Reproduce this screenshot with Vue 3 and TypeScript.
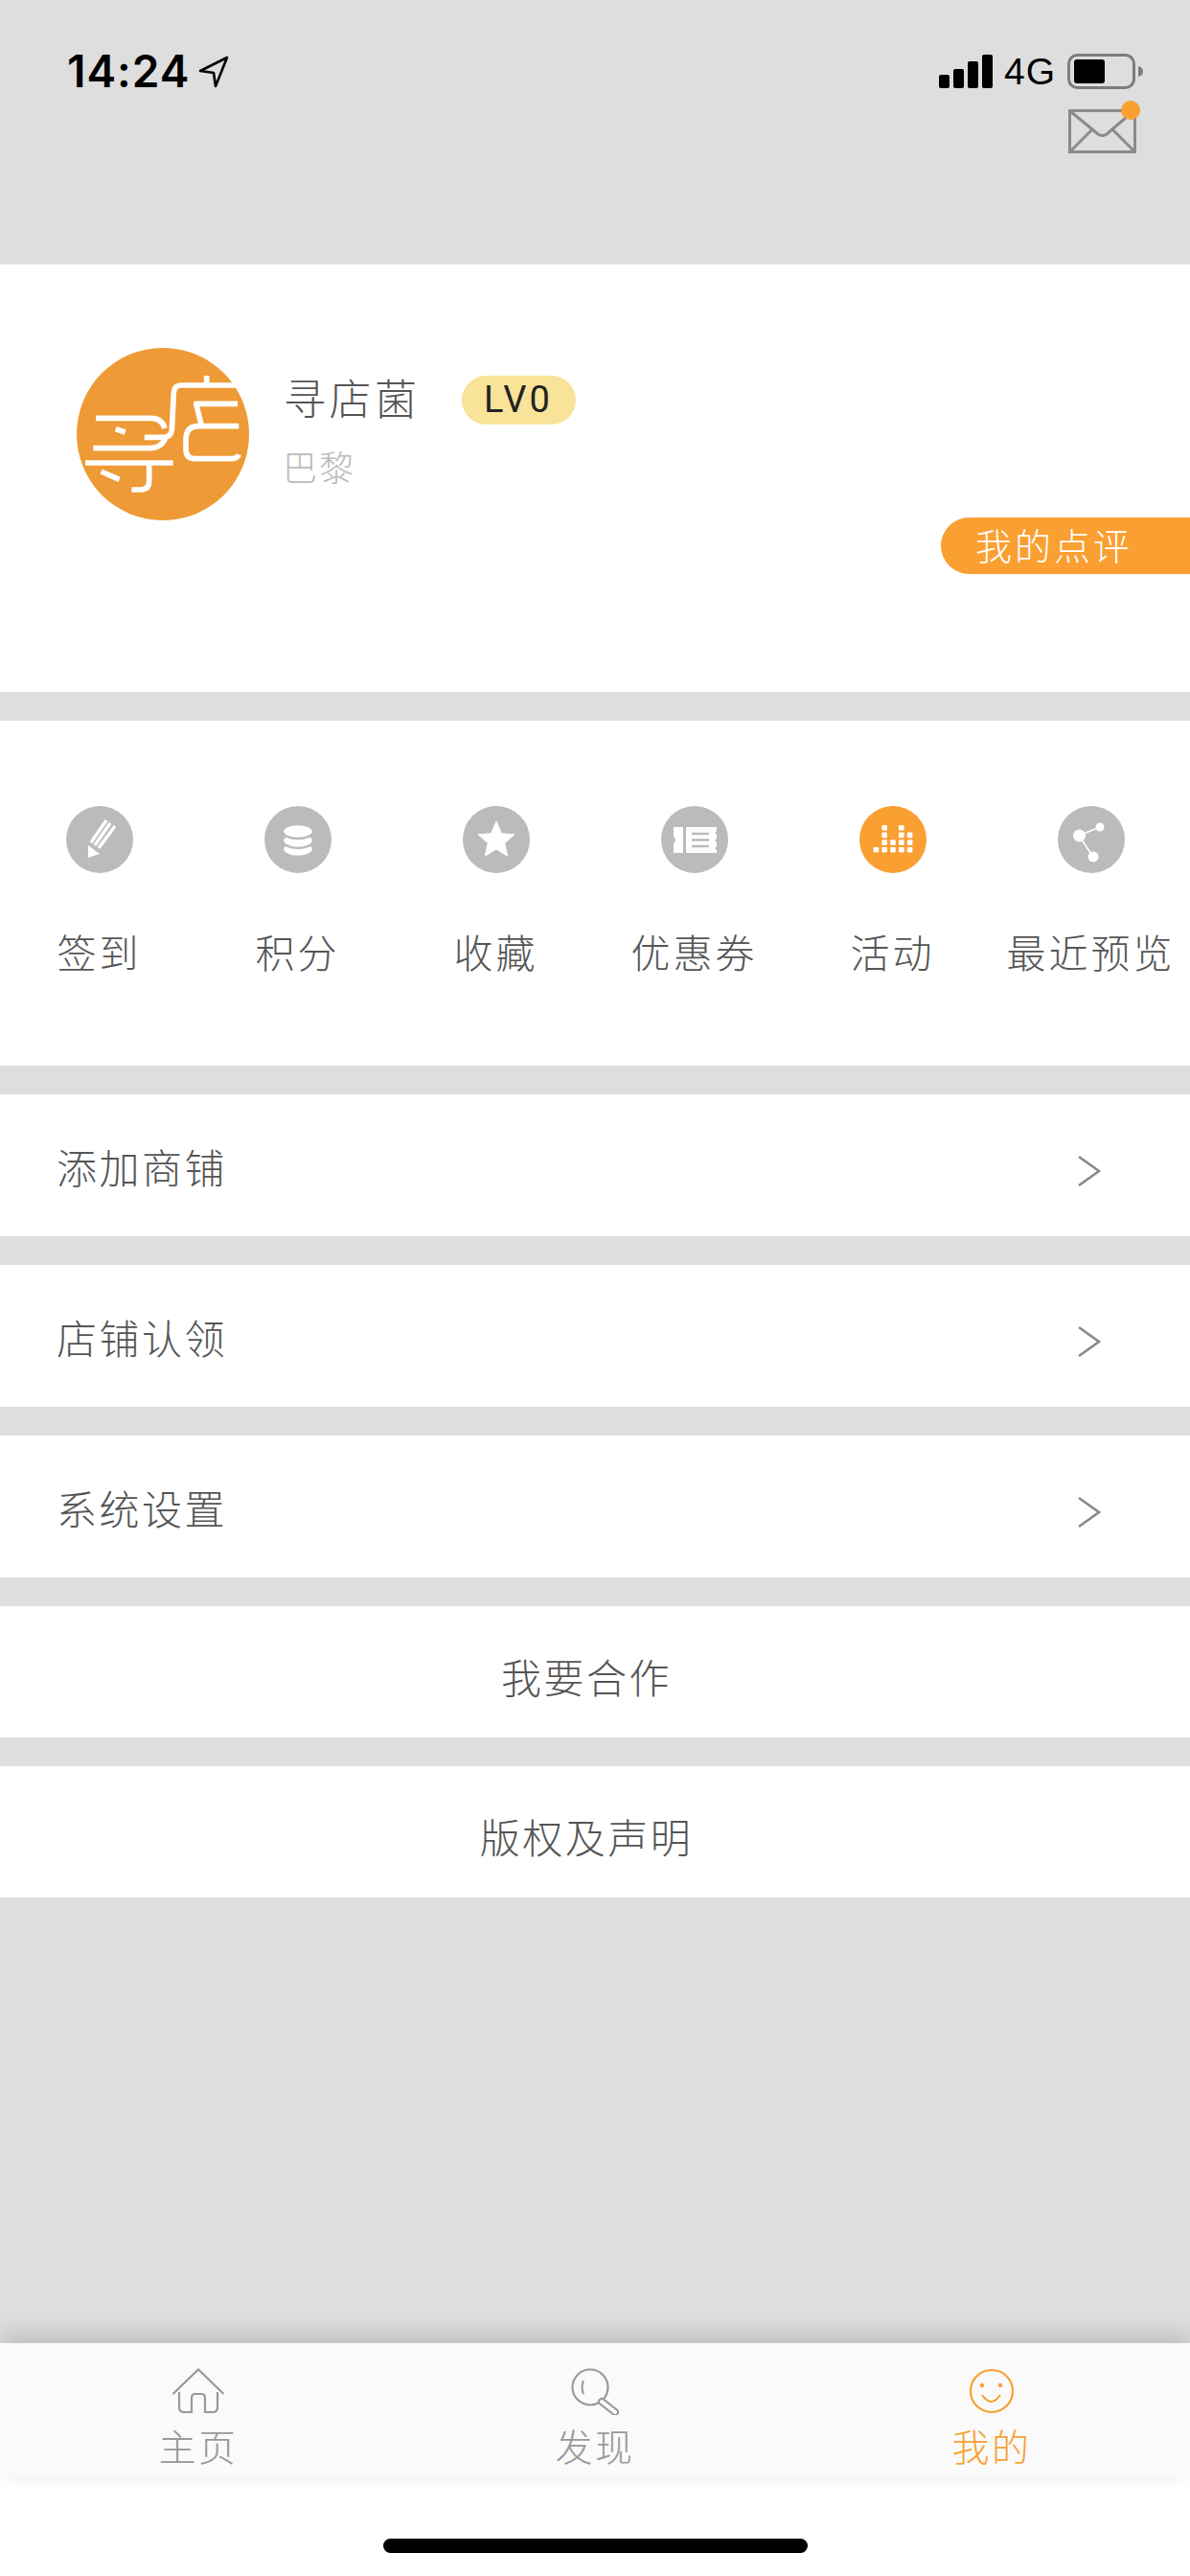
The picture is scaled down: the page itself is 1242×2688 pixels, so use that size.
<script setup lang="ts">
const actions = [
  { key: 'sign', label: '签到' },
  { key: 'points', label: '积分' },
  { key: 'star', label: '收藏' },
  { key: 'coupon', label: '优惠券' },
  { key: 'activity', label: '活动', active: true },
  { key: 'share', label: '最近预览' },
]
const links = ['添加商铺', '店铺认领', '系统设置']
const plainLinks = ['我要合作', '版权及声明']

// column heights of the little equalizer icon
const bars = [1, 4, 2, 4, 3]
const cells = bars.flatMap((h, col) =>
  Array.from({ length: h }, (_, row) => ({ x: 14.6 + col * 8.8, y: 43 - row * 7.7 })),
)
</script>

<template>
  <main class="page">
    <header class="top">
      <div class="status">
        <div class="clock">
          <span>14:24</span>
          <svg class="loc" width="32" height="34" viewBox="0 0 32 34">
            <path d="M30 2 L2 16 L16 18 L18 32 Z" fill="none" stroke="#000" stroke-width="2.6" stroke-linejoin="round" />
          </svg>
        </div>
        <div class="status-right">
          <svg width="56" height="36" viewBox="0 0 56 36">
            <rect x="0" y="21" width="11" height="14" rx="2" />
            <rect x="15" y="15" width="11" height="20" rx="2" />
            <rect x="30" y="7" width="11" height="28" rx="2" />
            <rect x="45" y="0" width="11" height="35" rx="2" />
          </svg>
          <span class="net">4G</span>
          <svg width="80" height="38" viewBox="0 0 80 38">
            <rect x="1.5" y="1.5" width="68" height="34" rx="9" fill="none" stroke="#7d7d7d" stroke-width="3" />
            <rect x="7" y="6" width="32" height="25" rx="3" />
            <path d="M74 13 Q79 14 79 18.500 Q79 23 74 24 Z" fill="#7d7d7d" />
          </svg>
        </div>
      </div>
      <div class="mail-row">
        <div class="mail">
          <svg width="72" height="46" viewBox="0 0 72 46">
            <rect x="1.500" y="1.500" width="68" height="43" fill="none" stroke="#8a8a8a" stroke-width="3" />
            <path d="M2 2 L31 26 Q35.500 29 40 26 L68 2 M2 44 L25 21 M69 44 L46 21" fill="none" stroke="#8a8a8a" stroke-width="3" />
          </svg>
          <i class="dot"></i>
        </div>
      </div>
    </header>

    <section class="profile">
      <svg class="avatar" width="180" height="180" viewBox="58 38 540 540">
        <circle cx="328" cy="308" r="270" fill="#ee9a36" />
        <g fill="none" stroke="#fff" stroke-width="17" stroke-linejoin="round">
          <path d="M118 258 H290 Q325 258 334 290" />
          <path d="M270 318 H330 Q352 318 356 296 L362 178 Q364 155 385 155 H556" />
          <path d="M110 352 H285 Q322 352 336 322" />
          <path d="M180 292 L210 302" />
          <path d="M85 398 H360" />
          <path d="M285 398 V455 Q285 482 258 482 H230" />
          <path d="M135 425 L192 450" />
          <path d="M465 125 V155" />
          <path d="M562 213 H432 L450 285" />
          <path d="M566 283 H440 Q400 283 400 325 V355 Q400 385 430 385 H545 Q560 385 566 372" />
        </g>
      </svg>
      <div class="who">
        <div class="name-line">
          <span class="name">寻店菌</span>
          <span class="level">LV0</span>
        </div>
        <div class="city">巴黎</div>
      </div>
      <div class="review">我的点评</div>
    </section>

    <section class="actions">
      <div v-for="a in actions" :key="a.key" class="action">
        <svg class="badge" :class="{ on: a.active }" width="70" height="70" viewBox="0 0 70 70">
          <circle cx="35" cy="35" r="35" class="disc" />
          <g v-if="a.key === 'sign'">
            <path d="M23 54 V41 L35 50 Z" fill="#fff" />
            <path d="M26 38 L42 15 M30 41 L46 18 M34 44 L51 21" stroke="#fff" stroke-width="3.400" fill="none" />
          </g>
          <g v-else-if="a.key === 'points'" fill="#fff" stroke="#bbb" stroke-width="2.500">
            <ellipse cx="35" cy="45" rx="16" ry="8" />
            <ellipse cx="35" cy="36" rx="16" ry="8" />
            <ellipse cx="35" cy="26.500" rx="16" ry="7.500" />
          </g>
          <path
            v-else-if="a.key === 'star'"
            d="M35 16 L40.300 28.700 L54 29.800 L43.600 38.800 L46.800 52.200 L35 45 L23.200 52.200 L26.400 38.800 L16 29.800 L29.700 28.700 Z"
            fill="#fff"
            stroke="#fff"
            stroke-linejoin="round"
          />
          <g v-else-if="a.key === 'coupon'">
            <path d="M13 22 H23 V49 H13 V39 Q17 35.500 13 32 Z" fill="#fff" />
            <path d="M26 22 H58 V26 L56 28 L58 30 V34 L56 36 L58 38 V42 L56 44 L58 46 V49 H26 Z" fill="#fff" />
            <path d="M32 29 H50 M32 35.500 H50 M32 42 H50" stroke="#bbb" stroke-width="2.500" />
          </g>
          <g v-else-if="a.key === 'activity'" fill="#fff">
            <rect v-for="(c, i) in cells" :key="i" :x="c.x" :y="c.y" width="5.600" height="5.600" rx="1" />
          </g>
          <g v-else fill="#fff">
            <path d="M22 31 L44 22 M22 31 L37 53" stroke="#fff" stroke-width="1.600" />
            <circle cx="22.500" cy="31" r="6.500" />
            <circle cx="44" cy="22" r="4.500" />
            <circle cx="37" cy="53" r="5.500" />
          </g>
        </svg>
        <span class="action-label">{{ a.label }}</span>
      </div>
    </section>

    <section v-for="l in links" :key="l" class="link">
      <span>{{ l }}</span>
      <svg class="chev" width="26" height="34" viewBox="0 0 26 34">
        <path d="M2 2 L23 17 L2 32" fill="none" stroke="#888" stroke-width="2.600" />
      </svg>
    </section>

    <section v-for="l in plainLinks" :key="l" class="plain">{{ l }}</section>

    <div class="spacer"></div>

    <nav class="tabs">
      <div class="tab">
        <svg width="56" height="50" viewBox="0 0 56 50">
          <path d="M1.500 28 L28 2.500 L54.500 28 M8 26 V42 Q8 47 13 47 H21 V32 Q21 28 25 28 H31 Q35 28 35 32 V47 H43 Q48 47 48 42 V26" fill="none" stroke="#999" stroke-width="2.200" />
        </svg>
        <span>主页</span>
      </div>
      <div class="tab">
        <svg width="56" height="50" viewBox="0 0 56 50">
          <circle cx="23" cy="21" r="18.500" fill="none" stroke="#999" stroke-width="2.200" />
          <path d="M16 14 Q13 21 16 28" fill="none" stroke="#999" stroke-width="2" />
          <path d="M35 36 L49 47" stroke="#999" stroke-width="8" stroke-linecap="round" />
          <path d="M35 36 L49 47" stroke="#fafafa" stroke-width="4" stroke-linecap="round" />
        </svg>
        <span>发现</span>
      </div>
      <div class="tab on">
        <svg width="56" height="50" viewBox="0 0 56 50">
          <circle cx="28" cy="25" r="22" fill="none" stroke="#f9a033" stroke-width="2.200" />
          <circle cx="18" cy="19" r="2.200" fill="#f9a033" />
          <circle cx="37" cy="19" r="2.200" fill="#f9a033" />
          <path d="M18 29 Q27.500 43 37 29" fill="none" stroke="#f9a033" stroke-width="2.200" />
        </svg>
        <span>我的</span>
      </div>
    </nav>

    <footer class="home-area"><i class="home-bar"></i></footer>
  </main>
</template>

<style>
html, body { margin: 0; padding: 0; }
</style>

<style scoped>
.page { width: 1242px; height: 2688px; display: flex; flex-direction: column; background: #dedede; color: #555; font-family: "Noto Sans CJK SC", "Noto Sans", sans-serif; overflow: hidden; }

.top { height: 276px; box-sizing: border-box; padding: 51px 48px 0 70px; }
.status { display: flex; justify-content: space-between; align-items: flex-start; height: 63px; }
.clock { display: flex; align-items: center; gap: 9px; height: 46px; color: #000; font: 600 46px/46px Inter, "Liberation Sans", sans-serif; letter-spacing: 1px; }
.loc { margin-top: 2px; }
.status-right { display: flex; align-items: center; gap: 12px; margin-top: 5px; color: #000; font: 400 39px/38px "Liberation Sans", sans-serif; }
.net { letter-spacing: 1px; }
.mail-row { display: flex; justify-content: flex-end; padding-right: 7px; }
.mail { position: relative; height: 46px; }
.dot { position: absolute; right: -3px; top: -9px; width: 20px; height: 20px; border-radius: 50%; background: #fa9f32; }

.profile { position: relative; height: 446px; background: #fff; box-sizing: border-box; padding: 87px 0 0 80px; display: flex; align-items: flex-start; }
.who { margin-left: 36px; padding-top: 22px; }
.name-line { display: flex; align-items: center; height: 58px; }
.name { font-size: 44px; line-height: 58px; letter-spacing: 3.500px; font-weight: 300; }
.level { margin-left: 43px; width: 119px; height: 51px; border-radius: 26px; background: #f8e398; color: #222; font: 400 38px/51px Roboto, sans-serif; letter-spacing: 3px; text-align: center; margin-top: 6px; }
.city { margin-top: 20px; font-size: 36px; line-height: 46px; letter-spacing: 2px; color: #bbb; font-weight: 300; margin-left: -1px; }
.review { position: absolute; right: 0; top: 264px; width: 260px; height: 59px; box-sizing: border-box; padding-left: 36px; border-radius: 30px 0 0 30px; background: #fa9f32; color: #fff; font-size: 38px; line-height: 56px; letter-spacing: 3px; font-weight: 300; }

.actions { margin-top: 30px; height: 360px; background: #fff; box-sizing: border-box; padding-top: 89px; display: grid; grid-template-columns: repeat(6, 1fr); }
.action { display: flex; flex-direction: column; align-items: center; gap: 58px; }
.disc { fill: #bbb; }
.on .disc { fill: #fa9f32; }
.action-label { font-size: 41px; line-height: 46px; letter-spacing: 3px; white-space: nowrap; font-weight: 300; }

.link { margin-top: 30px; height: 148px; background: #fff; box-sizing: border-box; padding: 0 92px 0 59px; display: flex; align-items: center; justify-content: space-between; font-size: 42px; letter-spacing: 2.500px; font-weight: 300; }
.chev { margin-top: 11px; }
.plain { margin-top: 30px; height: 137px; box-sizing: border-box; padding: 8px 18px 0 0; background: #fff; display: flex; align-items: center; justify-content: center; font-size: 42px; letter-spacing: 2.500px; font-weight: 300; }

.spacer { flex: 1; }

.tabs { height: 139px; background: #fafafa; display: grid; grid-template-columns: repeat(3, 1fr); box-shadow: 0 -8px 24px rgba(0, 0, 0, .16); position: relative; }
.tab { display: flex; flex-direction: column; align-items: center; padding-top: 25px; color: #999; font-size: 39px; line-height: 46px; letter-spacing: 2.500px; font-weight: 300; }
.tab span { margin-top: 8px; }
.tab.on { color: #f9a033; }
.home-area { height: 104px; background: #fff; display: flex; justify-content: center; padding-top: 65px; box-sizing: border-box; }
.home-bar { width: 443px; height: 15px; border-radius: 8px; background: #000; }
</style>
